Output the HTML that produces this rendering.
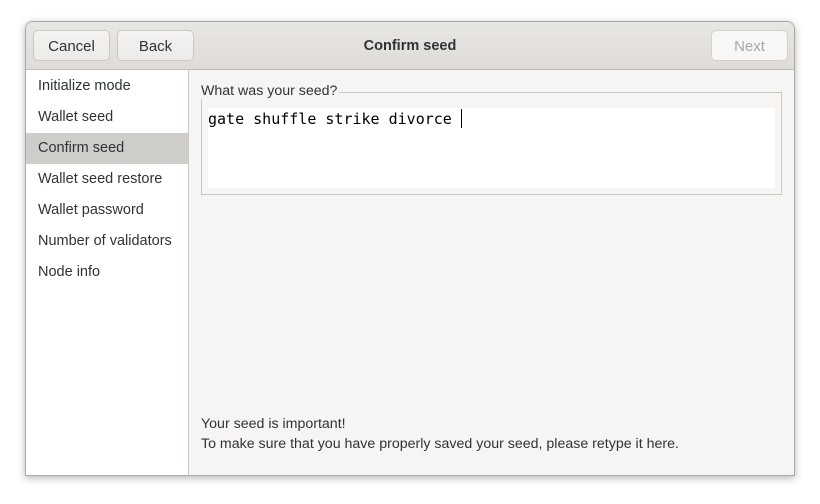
<!DOCTYPE html>
<html><head><style>
body{margin:0;width:820px;height:504px;background:#fff;font-family:"Liberation Sans",sans-serif;position:relative;overflow:hidden}
.win{position:absolute;left:25px;top:21px;width:768px;height:453px;background:#f6f5f4;border:1px solid #aaa;border-radius:8px 8px 0 0;box-shadow:0 2px 8px rgba(0,0,0,.3);overflow:hidden}
.hdr{position:absolute;left:0;top:0;width:768px;height:47px;background:linear-gradient(#e8e6e3,#dedbd8);border-bottom:1px solid #c0bdb9}
.btn{position:absolute;top:8px;height:31px;border:1px solid #cdc7c2;border-radius:5px;background:linear-gradient(#f4f3f2,#edebe9);font-size:15px;color:#2e3436;text-align:center;line-height:31px;box-sizing:border-box}
.title{position:absolute;left:0;width:768px;top:16px;text-align:center;font-weight:bold;font-size:14.5px;color:#2e3436}
.side{position:absolute;left:0;top:48px;width:162px;height:405px;background:#fff;border-right:1px solid #cdc7c2}
.side div{height:31px;line-height:31px;padding-left:12px;font-size:14.5px;color:#2e3436}
.side .sel{background:#cfcdca}
.t{position:absolute;font-size:14.2px;color:#2e3436}
</style></head><body>
<div class="win">
<div class="hdr">
<div class="btn" style="left:7px;width:77px">Cancel</div>
<div class="btn" style="left:91px;width:77px">Back</div>
<div class="title">Confirm seed</div>
<div class="btn" style="left:685px;width:77px;color:#a6a9a9;background:#f8f7f6;border-color:#d6d1cd">Next</div>
</div>
<div class="side">
<div style="margin-top:1px">Initialize mode</div><div>Wallet seed</div><div class="sel">Confirm seed</div><div>Wallet seed restore</div><div>Wallet password</div><div>Number of validators</div><div>Node info</div>
</div>
<div style="position:absolute;left:175px;top:70px;width:579px;height:101px;border:1px solid #cdc7c2"></div>
<div class="t" style="left:175px;top:61px;background:#f6f5f4;padding-right:2px">What was your seed?</div>
<div style="position:absolute;left:182px;top:86px;width:567px;height:80px;background:#fff"></div>
<div style="position:absolute;left:182px;top:87px;font-family:'DejaVu Sans Mono',monospace;font-size:15px;color:#000">gate shuffle strike divorce <span style="display:inline-block;width:1px;height:19px;background:#000;vertical-align:-4px"></span></div>
<div class="t" style="left:175px;top:392px;line-height:20px">Your seed is important!<br>To make sure that you have properly saved your seed, please retype it here.</div>
</div>
</body></html>
